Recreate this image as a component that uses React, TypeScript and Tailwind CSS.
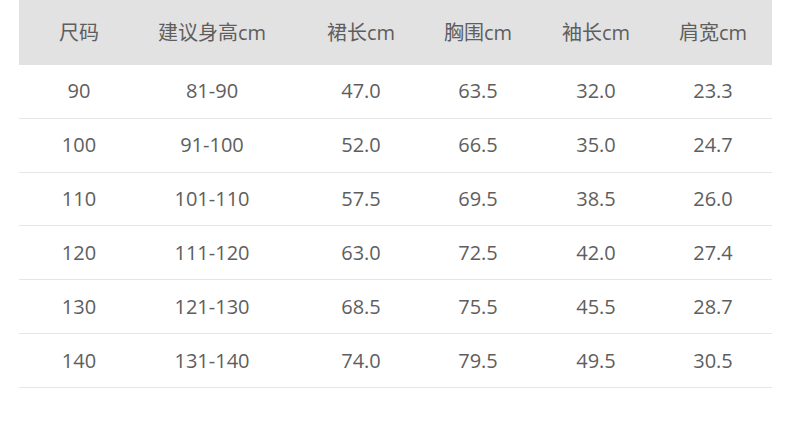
import React from "react";

const headers = ["尺码", "建议身高cm", "裙长cm", "胸围cm", "袖长cm", "肩宽cm"];

const rows = [
  ["90", "81-90", "47.0", "63.5", "32.0", "23.3"],
  ["100", "91-100", "52.0", "66.5", "35.0", "24.7"],
  ["110", "101-110", "57.5", "69.5", "38.5", "26.0"],
  ["120", "111-120", "63.0", "72.5", "42.0", "27.4"],
  ["130", "121-130", "68.5", "75.5", "45.5", "28.7"],
  ["140", "131-140", "74.0", "79.5", "49.5", "30.5"],
];

const cols = "grid grid-cols-[120px_146px_152px_82px_154px_1fr] pr-[19px] items-center";

const App = () => {
  return (
    <div
      className="w-[790px] h-[431px] bg-white text-[#5e5e5e] text-[20px]"
      style={{ fontFamily: '"Open Sans", "Noto Sans CJK SC", sans-serif' }}
    >
      <div className="ml-[19px] w-[753px]">
        <div className={`${cols} h-[65px] bg-[#e2e2e2]`}>
          {headers.map((h) => (
            <div key={h} className="text-center">
              {h}
            </div>
          ))}
        </div>

        {rows.map((row) => (
          <div key={row[0]} className={`${cols} h-[53.83px] border-b border-[#e6e6e6]`}>
            {row.map((cell, i) => (
              <div key={i} className="text-center">
                {cell}
              </div>
            ))}
          </div>
        ))}
      </div>
    </div>
  );
};

export default App;
